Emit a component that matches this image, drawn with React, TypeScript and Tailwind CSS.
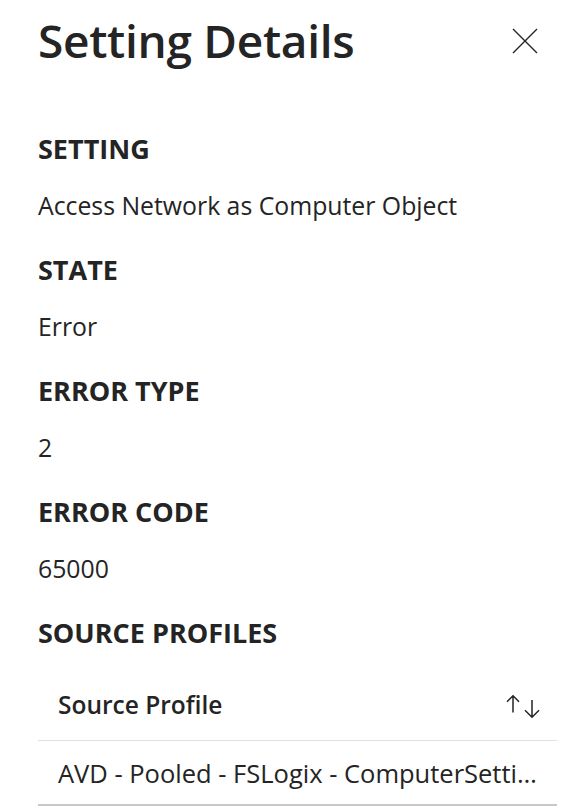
import React from "react";

const font = { fontFamily: '"Open Sans", "Noto Sans", Arial, sans-serif' };

const fields = [
  { label: "SETTING", value: "Access Network as Computer Object" },
  { label: "STATE", value: "Error" },
  { label: "ERROR TYPE", value: "2" },
  { label: "ERROR CODE", value: "65000" },
];

const CloseIcon: React.FC = () => (
  <svg width="26" height="26" viewBox="0 0 26 26" fill="none">
    <path d="M1 1L25 25M25 1L1 25" stroke="#242424" strokeWidth="1.4" />
  </svg>
);

const SortIcon: React.FC = () => (
  <svg width="34" height="24" viewBox="0 0 34 24" fill="none" stroke="#242424" strokeWidth="1.5">
    {/* up arrow */}
    <path d="M7 17.5V0.8M1 6.8l6-6 6 6" />
    {/* down arrow */}
    <path d="M26 5v17.2M19 15.2l7 7 7-7" />
  </svg>
);

const App: React.FC = () => {
  return (
    <div className="min-h-screen w-[584px] bg-white text-[#242424]" style={font}>
      <div className="pl-[38px] pr-[27px] pt-[14px]">
        {/* HEADER */}
        <div className="flex items-center justify-between">
          <h1 className="text-[46px] leading-[52px] font-semibold tracking-[-0.3px]">
            Setting Details
          </h1>
          <button className="mr-[19px] mt-[1px]">
            <CloseIcon />
          </button>
        </div>

        {/* FIELDS */}
        <div className="mt-[67px] flex flex-col gap-[33px]">
          {fields.map((f) => (
            <div key={f.label} className="flex flex-col gap-[24px]">
              <div className="text-[27px] leading-[32px] font-bold">{f.label}</div>
              <div className="text-[24.8px] leading-[32px]">{f.value}</div>
            </div>
          ))}
          <div className="text-[27px] leading-[32px] font-bold">SOURCE PROFILES</div>
        </div>

        {/* TABLE */}
        <div className="mt-[22px]">
          <div className="flex h-[70px] items-center justify-between border-b border-[#e1e1e1] pl-[20px] pr-[17px]">
            <span className="text-[24.5px] font-semibold">Source Profile</span>
            <div className="mt-[3px]">
              <SortIcon />
            </div>
          </div>
          <div className="flex h-[65px] items-center border-b-2 border-[#c8c8c8] pl-[20px] pr-[6px] pt-[1px]">
            <span className="truncate text-[25.5px]">AVD - Pooled - FSLogix - ComputerSettings</span>
          </div>
        </div>
      </div>
    </div>
  );
};

export default App;
